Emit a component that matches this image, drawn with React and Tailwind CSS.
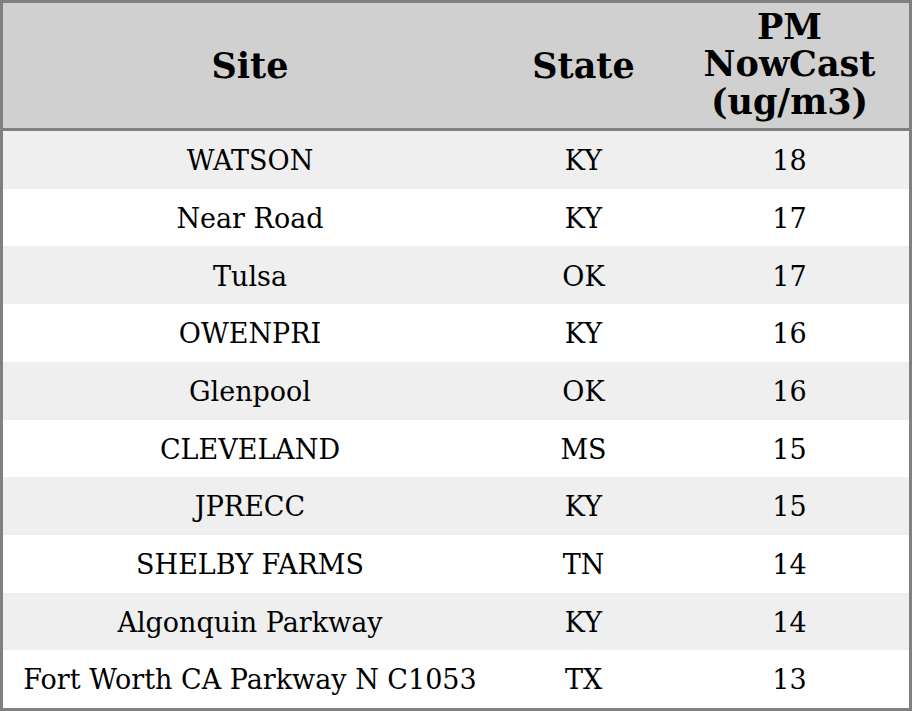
const ROWS = [
  { site: "WATSON", state: "KY", pm: 18 },
  { site: "Near Road", state: "KY", pm: 17 },
  { site: "Tulsa", state: "OK", pm: 17 },
  { site: "OWENPRI", state: "KY", pm: 16 },
  { site: "Glenpool", state: "OK", pm: 16 },
  { site: "CLEVELAND", state: "MS", pm: 15 },
  { site: "JPRECC", state: "KY", pm: 15 },
  { site: "SHELBY FARMS", state: "TN", pm: 14 },
  { site: "Algonquin Parkway", state: "KY", pm: 14 },
  { site: "Fort Worth CA Parkway N C1053", state: "TX", pm: 13 },
];

const COLS = "grid grid-cols-[494px_173px_239px]";

export default function App() {
  return (
    <div className="w-[912px] h-[711px] bg-white font-['DejaVu_Serif',serif] text-black">
      <div className="border-[3px] border-[#808080] h-full flex flex-col">
        {/* Header */}
        <div className={`${COLS} h-[128px] bg-[#d0d0d0] border-b-[3px] border-[#808080] font-bold text-[35px] leading-[37.5px] items-center text-center`}>
          <div>Site</div>
          <div>State</div>
          <div className="pb-[3px]">
            PM
            <br />
            NowCast
            <br />
            (ug/m3)
          </div>
        </div>

        {/* Rows */}
        <div className="flex-1 flex flex-col">
          {ROWS.map((r, i) => (
            <div
              key={r.site}
              className={`${COLS} flex-1 items-center text-center text-[27px] pt-[3px] ${
                i % 2 === 0 ? "bg-[#efefef]" : "bg-white"
              }`}
            >
              <div>{r.site}</div>
              <div>{r.state}</div>
              <div>{r.pm}</div>
            </div>
          ))}
        </div>
      </div>
    </div>
  );
}
